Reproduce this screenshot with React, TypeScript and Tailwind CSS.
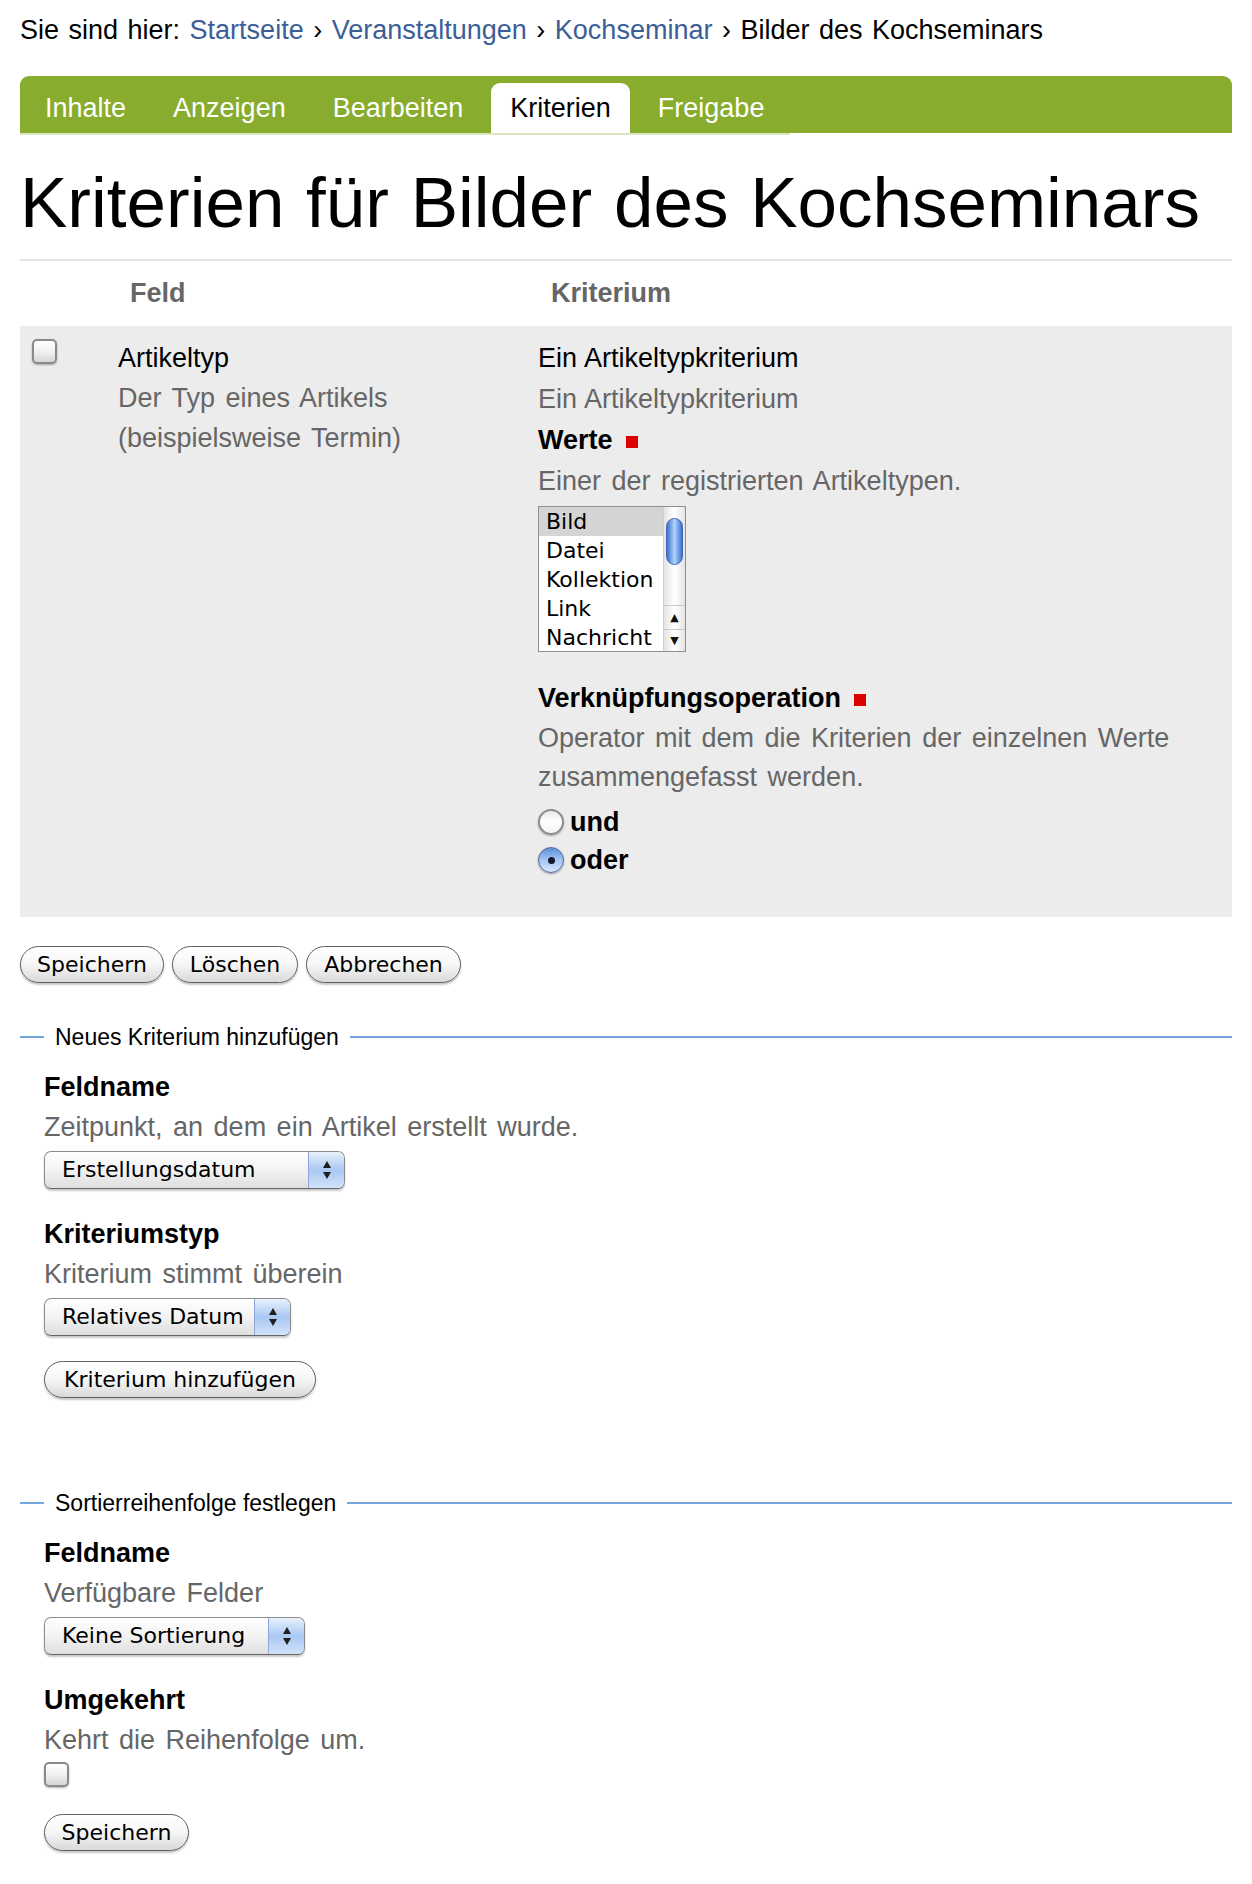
import React from "react";

const aquaFont = "font-['DejaVu_Sans','Lucida_Grande',sans-serif]";

function AquaButton({ label, w }: { label: string; w: string }) {
  return (
    <button
      type="button"
      className={`h-[37px] ${w} rounded-full border border-[#606060] bg-linear-to-b from-white via-[#f6f6f6] to-[#d9d9d9] text-center text-[22px] leading-[35px] text-black shadow-[0_2px_2px_rgba(0,0,0,0.22)] ${aquaFont}`}
    >
      {label}
    </button>
  );
}

function UpDown() {
  return (
    <svg width="12" height="24" viewBox="0 0 12 24" aria-hidden="true">
      <path d="M6 3 L10 10 L2 10 Z" fill="#1e1e1e" />
      <path d="M6 21 L10 14 L2 14 Z" fill="#1e1e1e" />
    </svg>
  );
}

function AquaSelect({ label, w }: { label: string; w: string }) {
  return (
    <div
      className={`flex h-[38px] ${w} items-stretch overflow-hidden rounded-[7px] border border-[#8c8c8c] border-b-[#666] bg-linear-to-b from-white via-[#f3f3f3] to-[#dedede] shadow-[0_2px_2px_rgba(0,0,0,0.22)] ${aquaFont}`}
    >
      <div className="flex-1 pl-[17px] text-[22px] leading-[36px] text-black">{label}</div>
      <div className="flex w-[36px] items-center justify-center border-l border-[#8ea6d6] bg-linear-to-b from-[#e9f1fc] via-[#a9c8f2] to-[#d2e3fa]">
        <UpDown />
      </div>
    </div>
  );
}

function AquaCheckbox() {
  return (
    <div className="h-[25px] w-[25px] rounded-[5px] border-2 border-[#8a8a8a] bg-linear-to-b from-white via-[#f1f1f1] to-[#d6d6d6] shadow-[0_1px_2px_rgba(0,0,0,0.3)]" />
  );
}

function Radio({ checked }: { checked?: boolean }) {
  if (checked) {
    return (
      <div className="flex h-[26px] w-[26px] items-center justify-center rounded-full border border-[#50689a] bg-linear-to-b from-[#5f8fd9] via-[#a4c6f3] to-[#d7e7fc] shadow-[0_1px_2px_rgba(0,0,0,0.35)]">
        <div className="h-[7px] w-[7px] rounded-full bg-[#161a2a]" />
      </div>
    );
  }
  return (
    <div className="h-[26px] w-[26px] rounded-full border-2 border-[#8c8c8c] bg-linear-to-b from-[#e8e8e8] via-white to-[#f2f2f2] shadow-[0_1px_2px_rgba(0,0,0,0.3)]" />
  );
}

function Legend({ text }: { text: string }) {
  return (
    <div className="flex h-[30px] items-center">
      <div className="h-[2px] w-[24px] bg-[#74a5dc]" />
      <div className="px-[11px] text-[23px] leading-[30px] text-black">{text}</div>
      <div className="h-[2px] flex-1 bg-[#74a5dc]" />
    </div>
  );
}

function RedMark() {
  return <span className="ml-[13px] inline-block h-[12px] w-[12px] translate-y-[1px] bg-[#dd0000]" />;
}

export default function App() {
  const items = ["Bild", "Datei", "Kollektion", "Link", "Nachricht"];
  const tabs = ["Inhalte", "Anzeigen", "Bearbeiten", "Kriterien", "Freigabe"];
  return (
    <div className="min-h-[1884px] bg-white px-5 font-['Liberation_Sans',Arial,sans-serif] text-black">
      <nav className="pt-[10px] text-[27px] leading-[40px] [word-spacing:2px]">
        Sie sind hier: <a className="text-[#3b5e96]">Startseite</a> ›{" "}
        <a className="text-[#3b5e96]">Veranstaltungen</a> › <a className="text-[#3b5e96]">Kochseminar</a> › Bilder des
        Kochseminars
      </nav>

      <div className="mt-[26px] flex h-[57px] items-end gap-[9px] rounded-t-[9px] bg-[#88ad2e] pl-[6px]">
        {tabs.map((t) =>
          t === "Kriterien" ? (
            <div key={t} className="h-[50px] rounded-t-[9px] bg-white px-[19px] text-[27px] leading-[50px] text-black">
              {t}
            </div>
          ) : (
            <div key={t} className="h-[50px] px-[19px] text-[27px] leading-[50px] text-white">
              {t}
            </div>
          )
        )}
      </div>
      <div className="h-[2px] w-[770px] bg-[#dbe5c0]" />

      <h1 className="mt-[25px] text-[71px] leading-[85px] font-normal [word-spacing:2px]">
        Kriterien für Bilder des Kochseminars
      </h1>

      <div className="mt-[14px] border-t-2 border-[#e4e4e4]">
        <div className="grid h-[65px] grid-cols-[86px_420px_1fr] items-center text-[27px] font-bold text-[#666]">
          <div />
          <div className="pl-[24px]">Feld</div>
          <div className="pl-[25px]">Kriterium</div>
        </div>

        <div className="grid grid-cols-[86px_420px_1fr] bg-[#ececec] pt-[12px] pb-[38px] text-[27px]">
          <div className="pl-[12px] pt-[1px]">
            <AquaCheckbox />
          </div>
          <div className="pl-[12px] leading-[40px]">
            <div className="text-black">Artikeltyp</div>
            <div className="text-[#666] [word-spacing:3px]">
              Der Typ eines Artikels
              <br />
              (beispielsweise Termin)
            </div>
          </div>
          <div className="pl-[12px]">
            <div className="leading-[41px] [word-spacing:1px]">Ein Artikeltypkriterium</div>
            <div className="leading-[41px] text-[#666] [word-spacing:1px]">Ein Artikeltypkriterium</div>
            <div className="flex items-center leading-[41px] font-bold">
              Werte
              <RedMark />
            </div>
            <div className="leading-[41px] text-[#666] [word-spacing:3px]">Einer der registrierten Artikeltypen.</div>

            <div className={`mt-[4px] flex h-[146px] w-[148px] border border-[#8f8f8f] bg-white ${aquaFont}`}>
              <div className="flex-1">
                {items.map((it, i) => (
                  <div
                    key={it}
                    className={`h-[29px] pl-[7px] text-[22px] leading-[29px] ${i === 0 ? "bg-[#d4d4d4]" : ""}`}
                  >
                    {it}
                  </div>
                ))}
              </div>
              <div className="relative w-[22px] border-l border-[#cfcfcf] bg-linear-to-r from-[#e4e4e4] via-white to-[#e4e4e4]">
                <div className="absolute left-[2px] top-[11px] h-[47px] w-[17px] rounded-full border border-[#3f66b4] bg-linear-to-r from-[#3d6fd2] via-[#b2d3fa] to-[#3d6fd2]" />
                <div className="absolute bottom-0 left-0 right-0">
                  <div className="flex h-[24px] items-center justify-center border-t border-[#c9c9c9] text-[11px] leading-none text-[#111]">
                    ▲
                  </div>
                  <div className="flex h-[22px] items-center justify-center border-t border-[#c9c9c9] text-[11px] leading-none text-[#111]">
                    ▼
                  </div>
                </div>
              </div>
            </div>

            <div className="mt-[26px] flex items-center leading-[41px] font-bold">
              Verknüpfungsoperation
              <RedMark />
            </div>
            <div className="leading-[39px] text-[#666] [word-spacing:3px]">
              Operator mit dem die Kriterien der einzelnen Werte
              <br />
              zusammengefasst werden.
            </div>
            <div className="mt-[6px] flex h-[38px] items-center gap-[6px] font-bold">
              <Radio />
              und
            </div>
            <div className="flex h-[38px] items-center gap-[6px] font-bold">
              <Radio checked />
              oder
            </div>
          </div>
        </div>
      </div>

      <div className="mt-[29px] flex gap-[8px]">
        <AquaButton label="Speichern" w="w-[144px]" />
        <AquaButton label="Löschen" w="w-[126px]" />
        <AquaButton label="Abbrechen" w="w-[155px]" />
      </div>

      <div className="mt-[39px]">
        <Legend text="Neues Kriterium hinzufügen" />
        <div className="pl-[24px] text-[27px] leading-[40px]">
          <div className="mt-[15px] font-bold">Feldname</div>
          <div className="text-[#666] [word-spacing:3px]">Zeitpunkt, an dem ein Artikel erstellt wurde.</div>
          <div className="mt-[4px]">
            <AquaSelect label="Erstellungsdatum" w="w-[301px]" />
          </div>
          <div className="mt-[25px] font-bold">Kriteriumstyp</div>
          <div className="text-[#666] [word-spacing:3px]">Kriterium stimmt überein</div>
          <div className="mt-[4px]">
            <AquaSelect label="Relatives Datum" w="w-[247px]" />
          </div>
          <div className="mt-[22px]">
            <AquaButton label="Kriterium hinzufügen" w="w-[272px]" />
          </div>
        </div>
      </div>

      <div className="mt-[90px]">
        <Legend text="Sortierreihenfolge festlegen" />
        <div className="pl-[24px] text-[27px] leading-[40px]">
          <div className="mt-[15px] font-bold">Feldname</div>
          <div className="text-[#666] [word-spacing:3px]">Verfügbare Felder</div>
          <div className="mt-[4px]">
            <AquaSelect label="Keine Sortierung" w="w-[261px]" />
          </div>
          <div className="mt-[25px] font-bold">Umgekehrt</div>
          <div className="text-[#666] [word-spacing:3px]">Kehrt die Reihenfolge um.</div>
          <div className="mt-[2px]">
            <AquaCheckbox />
          </div>
          <div className="mt-[24px]">
            <AquaButton label="Speichern" w="w-[145px]" />
          </div>
        </div>
      </div>
    </div>
  );
}
